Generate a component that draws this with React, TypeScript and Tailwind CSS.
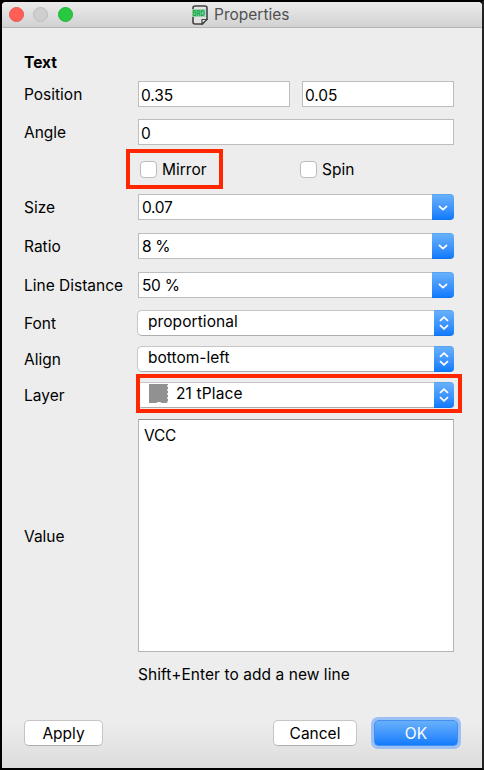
import type { ReactNode } from "react";

function Row({ label, className = "", children }: { label?: string; className?: string; children: ReactNode }) {
  return (
    <div className={`flex h-[26px] ${className}`}>
      <div className="w-[114px] shrink-0 leading-[27px]">{label}</div>
      {children}
    </div>
  );
}

function Field({ value, className = "" }: { value: string; className?: string }) {
  return (
    <div className={`h-[26px] border border-[#bdbdbd] bg-white pl-[2px] leading-[27px] tracking-[-0.1px] ${className}`}>{value}</div>
  );
}

function Combo({ value }: { value: string }) {
  return (
    <div className="flex h-[26px] w-[316px]">
      <div className="h-[26px] flex-1 border border-r-0 border-[#bdbdbd] bg-white pl-[3px] leading-[26px] tracking-[-0.3px]">{value}</div>
      <div className="flex w-[22px] items-center justify-center rounded-r-[4px] border-y border-t-[#58a4f2] border-b-[#1474ee] bg-linear-to-b from-[#67b0fa] to-[#0e7bfd]">
        <svg width="10" height="6" viewBox="0 0 10 6" className="mt-[2px]" fill="none" stroke="white" strokeWidth="1.7">
          <path d="M1 1 5 4.6 9 1" />
        </svg>
      </div>
    </div>
  );
}

function Popup({ children }: { children: ReactNode }) {
  return (
    <div className="-ml-px flex h-[26px] w-[317px]">
      <div className="flex flex-1 rounded-l-[5px] border border-r-0 border-[#c6c6c6] border-b-[#adadad] bg-white pl-[10px] leading-[22px]">
        {children}
      </div>
      <div className="flex w-[20px] items-center justify-center rounded-r-[4px] border-y border-t-[#58a4f2] border-b-[#1474ee] bg-linear-to-b from-[#67b0fa] to-[#0e7bfd]">
        <svg width="10" height="14" viewBox="0 0 10 14" fill="none" stroke="white" strokeWidth="1.8">
          <path d="M1 4.9 5 1.2 9 4.9M1 9.1 5 12.8 9 9.1" />
        </svg>
      </div>
    </div>
  );
}

function Check({ label }: { label: string }) {
  return (
    <div className="flex items-center">
      <div className="mr-[5px] size-[17px] rounded-[4px] border border-[#bcbcbc] bg-white" />
      <span className="pt-[2px]">{label}</span>
    </div>
  );
}

export default function App() {
  return (
    <div className="h-[770px] w-[484px] border-2 border-black border-r-[#222] bg-black font-['Inter',sans-serif] text-[15.5px] text-black">
      <div className="flex h-[766px] flex-col overflow-hidden rounded-t-[4px] bg-linear-to-b from-[#ededed] from-[94%] to-[#dcdcdc]">
        <div className="flex h-[26px] shrink-0 items-center border-b border-[#b4b4b4] bg-linear-to-b from-[#ebebeb] to-[#d2d2d2] pl-[7px]">
          <div className="size-[15px] rounded-full border border-[#e9564f] bg-[#ff5f57]" />
          <div className="ml-[9px] size-[15px] rounded-full border border-[#bdbdbd] bg-[#cfcfcf]" />
          <div className="ml-[10px] size-[15px] rounded-full border border-[#22b336] bg-[#28c940]" />
          <svg className="ml-[119px]" width="16" height="20" viewBox="0 0 16 20">
            <path d="M3 1H13Q15 1 15 3V14L10.5 19H3Q1 19 1 17V3Q1 1 3 1Z" fill="#e2e2e2" stroke="#424242" strokeWidth="1.6" />
            <path d="M10 19V14.5H15Z" fill="#efefef" stroke="#424242" strokeWidth="1.2" />
            <rect x="0" y="4" width="13.5" height="8" fill="#a0cdb0" />
            <text x="0.5" y="11" fontSize="8" fontWeight="800" fill="#0cad4b" textLength="12.5" lengthAdjust="spacingAndGlyphs">BRD</text>
          </svg>
          <span className="ml-[6px] pt-px leading-[26px] text-[#515151]">Properties</span>
        </div>

        <div className="px-[22px] pt-[21px]">
          <div className="h-[26px] leading-[28px] font-bold">Text</div>
          <Row label="Position" className="mt-[6px]">
            <Field value="0.35" className="w-[152px]" />
            <Field value="0.05" className="ml-[12px] w-[152px]" />
          </Row>
          <Row label="Angle" className="mt-[12px]">
            <Field value="0" className="w-[316px]" />
          </Row>
          <Row className="mt-[11px]">
            <div className="-mt-[7px] -ml-[12px] flex h-[40px] w-[97px] shrink-0 border-4 border-[#ff2600] pl-[10px]">
              <Check label="Mirror" />
            </div>
            <div className="ml-[77px] flex">
              <Check label="Spin" />
            </div>
          </Row>
          <Row label="Size" className="mt-[12px]"><Combo value="0.07" /></Row>
          <Row label="Ratio" className="mt-[13px]"><Combo value="8 %" /></Row>
          <Row label="Line Distance" className="mt-[13px]"><Combo value="50 %" /></Row>
          <Row label="Font" className="mt-[12px]"><Popup><span className="tracking-[0.08px]">proportional</span></Popup></Row>
          <Row label="Align" className="mt-[10px]"><Popup>bottom-left</Popup></Row>
          <Row label="Layer" className="mt-[10px]">
            <div className="relative h-[26px]">
              <Popup>
                <svg className="mt-[1px] mr-[8px]" width="20" height="20" viewBox="0 0 20 20">
                  <path d="M1 0H20V19H14L12 18H10L8 19H1Z" fill="#919191" />
                  <path d="M19.5 1V19" stroke="#ddd" strokeDasharray="2 2" />
                </svg>
                <span className="tracking-[0.15px]">21 tPlace</span>
              </Popup>
              <div className="absolute -top-[8px] -left-[2px] h-[39px] w-[326px] border-4 border-[#ff2600]" />
            </div>
          </Row>
          <div className="mt-[11px] flex h-[233px]">
            <div className="w-[114px] shrink-0 self-center pt-[3px]">Value</div>
            <div className="w-[316px] border border-[#b5b5b5] border-t-[#929292] bg-white pt-[5px] pl-[5px] leading-[22px] tracking-[-0.2px]">VCC</div>
          </div>
          <div className="mt-[10px] ml-[114px] h-[26px] leading-[26px] tracking-[0.06px]">Shift+Enter to add a new line</div>
          <div className="mt-[32px] flex h-[26px] text-center leading-[25px]">
            <div className="w-[79px] rounded-[5px] border border-[#c5c5c5] border-b-[#acacac] bg-white">Apply</div>
            <div className="ml-[170px] w-[84px] rounded-[5px] border border-[#c5c5c5] border-b-[#acacac] bg-white">Cancel</div>
            <div className="ml-[17px] w-[84px] rounded-[4px] border border-[#468ff0] bg-linear-to-b from-[#67b0fa] to-[#0e7bfd] text-white ring-[3px] ring-[#9bc1f4]">OK</div>
          </div>
        </div>
      </div>
    </div>
  );
}
